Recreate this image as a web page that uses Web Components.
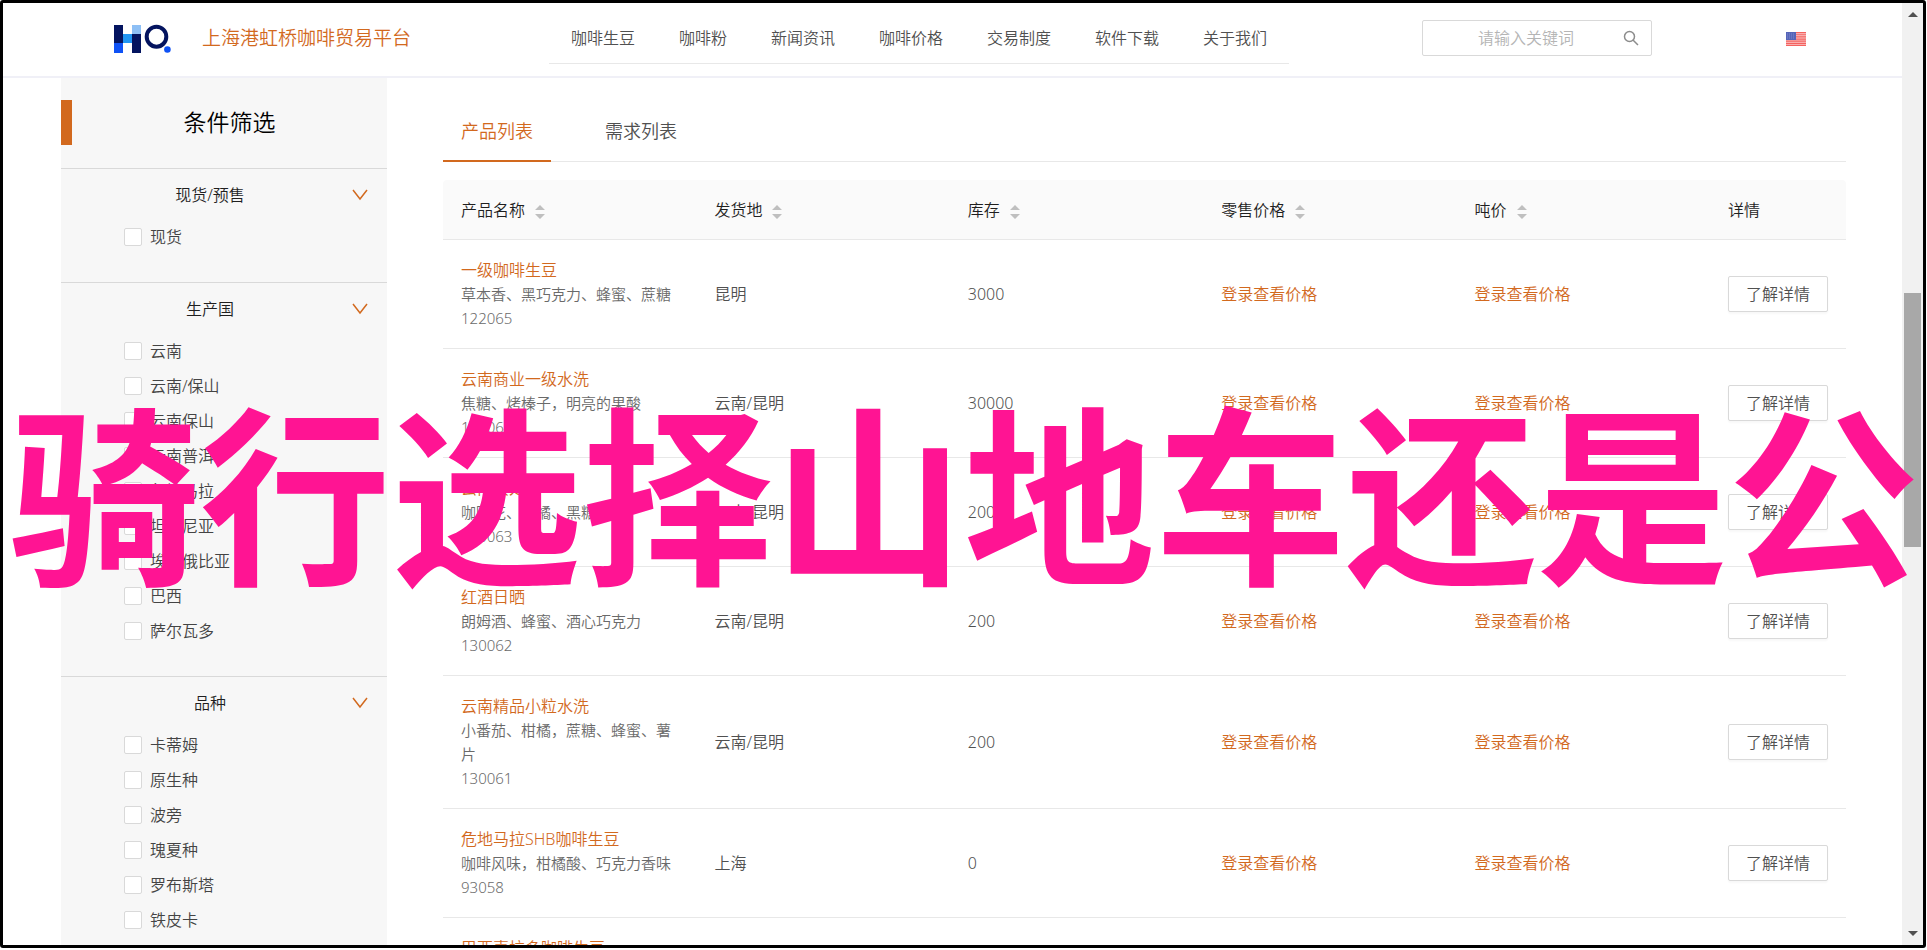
<!DOCTYPE html>
<html lang="zh-CN">
<head>
<meta charset="utf-8">
<title>上海港虹桥咖啡贸易平台</title>
<style>
html, body { height: 100%; margin: 0; }
body {
  overflow: hidden;
  background: #fff;
  font-family: "Noto Sans", "Noto Sans CJK SC", sans-serif;
  font-size: 16px;
  line-height: 24px;
  font-weight: 350;
  color: #505050;
  --brand: #d2691e;
  --line: #e8e8e8;
  --control: #d9d9d9;
}
</style>
</head>
<body>
<trade-page></trade-page>
<script>
const define = (name, markup, setup) => {
  const template = document.createElement('template');
  template.innerHTML = '<style>*{box-sizing:border-box}a{color:inherit;text-decoration:none}</style>' + markup;
  customElements.define(name, class extends HTMLElement {
    connectedCallback() {
      if (this.shadowRoot) return;
      const root = this.attachShadow({ mode: 'open' });
      root.append(template.content.cloneNode(true));
      if (setup) setup(root, this);
    }
  });
};

define('brand-logo', `
<style>
:host { display: flex; align-items: center; gap: 31px; }
svg { display: block; margin-top: 2px; }
a { color: var(--brand); font-size: 19px; white-space: nowrap; }
</style>
<svg width="58" height="30" viewBox="0 0 58 30" role="img" aria-label="HQ">
  <path fill="#04145f" d="M1 1h9v18H1zM19 10h9v19h-9z"/>
  <path fill="#8dbff5" d="M19 1h9v9h-9z"/>
  <path fill="#2196f3" d="M10 10h9v9h-9z"/>
  <path fill="#0f52f5" d="M1 19h9v10H1z"/>
  <ellipse cx="43.500" cy="12.700" rx="9.800" ry="10" fill="none" stroke="#04145f" stroke-width="4"/>
  <circle cx="54.400" cy="25.500" r="3.300" fill="#0f52f5"/>
</svg>
<a href="#">上海港虹桥咖啡贸易平台</a>`);

define('main-nav', `
<style>
:host { display: block; }
nav { display: flex; height: 61px; border-bottom: 1px solid var(--line); }
a { padding: 0 22px; line-height: 70px; white-space: nowrap; }
</style>
<nav>
<a href="#">咖啡生豆</a><a href="#">咖啡粉</a><a href="#">新闻资讯</a><a href="#">咖啡价格</a><a href="#">交易制度</a><a href="#">软件下载</a><a href="#">关于我们</a>
</nav>`);

define('search-box', `
<style>
:host { display: block; position: relative; width: 230px; }
input { display: block; width: 100%; height: 36px; padding: 0 34px 0 12px; border: 1px solid var(--control); border-radius: 2px; background: #fff; font: inherit; text-align: center; color: inherit; outline: 0; }
input::placeholder { color: #b5b5b5; opacity: 1; }
button { position: absolute; right: 13px; top: 10px; width: 16px; height: 16px; padding: 0; border: 0; background: none; }
svg { display: block; }
</style>
<input type="text" aria-label="关键词" placeholder="请输入关键词">
<button type="button" aria-label="搜索"><svg width="16" height="16" viewBox="0 0 16 16" fill="none" stroke="#8c8c8c" stroke-width="1.500"><circle cx="6.500" cy="6.500" r="5"/><path d="M10 10l5 5"/></svg></button>`);

define('lang-flag', `
<style>
:host { display: block; }
svg { display: block; }
</style>
<a href="#" aria-label="English"><svg width="20" height="14" viewBox="0 0 20 14">
<path fill="#fbc9c9" d="M0 0h20v14H0z"/>
<path stroke="#f4625f" stroke-width="1.200" d="M0 .6h20M0 2.750h20M0 4.900h20M0 7.050h20M0 9.200h20M0 11.350h20M0 13.400h20"/>
<path fill="#5565b8" d="M0 0h10v8H0z"/>
<path stroke="#8f9ad4" stroke-width=".7" stroke-dasharray="1 1" d="M1 2h8M1 4h8M1 6h8"/>
</svg></a>`);

define('site-header', `
<style>
:host { display: grid; grid-template-columns: 436px 740px 133px 230px 1fr; height: 75px; border-bottom: 2px solid #f0f0f7; padding-left: 110px; }
brand-logo { height: 70px; }
search-box { grid-column: 4; margin-top: 17px; }
lang-flag { margin: 29px 0 0 134px; }
</style>
<brand-logo></brand-logo><main-nav></main-nav><search-box></search-box><lang-flag></lang-flag>`);

define('filter-option', `
<style>
:host { display: block; }
label { display: flex; align-items: center; gap: 8px; height: 35px; }
input { appearance: none; width: 18px; height: 18px; margin: 0; border: 1px solid var(--control); border-radius: 2px; background: #fff; }
</style>
<label><input type="checkbox"><slot></slot></label>`);

define('filter-group', `
<style>
:host { display: block; border-top: 1px solid var(--control); padding-bottom: 28px; }
header { display: flex; align-items: center; height: 50px; padding: 2px 18px 0 0; }
h3 { flex: 1; margin: 0; padding-left: 8px; font: inherit; color: #1f1f1f; text-align: center; }
button { width: 18px; height: 18px; padding: 0; border: 0; background: none; }
svg { display: block; }
.options { padding-left: 63px; }
</style>
<header><h3></h3><button type="button" aria-label="收起"><svg width="18" height="18" viewBox="0 0 18 18" fill="none" stroke="#d2691e" stroke-width="1.500"><path d="M2 4l7 9 7-9"/></svg></button></header>
<div class="options"><slot></slot></div>`, (root, host) => {
  root.querySelector('h3').textContent = host.getAttribute('heading');
});

define('filter-panel', `
<style>
:host { display: block; background: #f7f7f7; color: #444; }
.title { display: flex; align-items: center; height: 90px; padding-bottom: 2px; }
.title::before { content: ""; width: 11px; height: 45px; background: var(--brand); }
h2 { flex: 1; margin: 0; font-size: 23px; line-height: 32px; font-weight: inherit; color: #000; text-align: center; }
</style>
<div class="title"><h2>条件筛选</h2></div>
<filter-group heading="现货/预售"><filter-option>现货</filter-option></filter-group>
<filter-group heading="生产国"><filter-option>云南</filter-option><filter-option>云南/保山</filter-option><filter-option>云南保山</filter-option><filter-option>云南普洱</filter-option><filter-option>危地马拉</filter-option><filter-option>坦桑尼亚</filter-option><filter-option>埃塞俄比亚</filter-option><filter-option>巴西</filter-option><filter-option>萨尔瓦多</filter-option></filter-group>
<filter-group heading="品种"><filter-option>卡蒂姆</filter-option><filter-option>原生种</filter-option><filter-option>波旁</filter-option><filter-option>瑰夏种</filter-option><filter-option>罗布斯塔</filter-option><filter-option>铁皮卡</filter-option></filter-group>`);

define('list-tabs', `
<style>
:host { display: flex; gap: 36px; border-bottom: 1px solid var(--line); font-size: 18px; }
button { height: 60px; margin-bottom: -1px; padding: 0 18px; border: 0; border-bottom: 2px solid transparent; background: none; font: inherit; color: inherit; }
button[aria-selected=true] { color: var(--brand); border-color: var(--brand); }
</style>
<button type="button" role="tab" aria-selected="true">产品列表</button><button type="button" role="tab" aria-selected="false">需求列表</button>`);

const products = [
  ['一级咖啡生豆', '草本香、黑巧克力、蜂蜜、蔗糖', '122065', '昆明', '3000'],
  ['云南商业一级水洗', '焦糖、烤榛子，明亮的果酸', '130064', '云南/昆明', '30000'],
  ['云南蜜处理', '咖啡花、柑橘、黑糖', '130063', '云南/昆明', '200'],
  ['红酒日晒', '朗姆酒、蜂蜜、酒心巧克力', '130062', '云南/昆明', '200'],
  ['云南精品小粒水洗', '小番茄、柑橘，蔗糖、蜂蜜、薯片', '130061', '云南/昆明', '200'],
  ['危地马拉SHB咖啡生豆', '咖啡风味，柑橘酸、巧克力香味', '93058', '上海', '0'],
  ['巴西喜拉多咖啡生豆', '坚果、黑巧克力', '93057', '上海', '0']
];

define('product-table', `
<style>
:host { display: block; }
table { width: 100%; table-layout: fixed; border-collapse: separate; border-spacing: 0; }
th, td { padding: 18px; text-align: left; border-bottom: 1px solid var(--line); }
th:last-child { width: 136px; }
th { height: 60px; padding: 0 18px; font-weight: inherit; color: #1f1f1f; background: #fafafa; white-space: nowrap; }
th:first-child { border-top-left-radius: 4px; }
th:last-child { border-top-right-radius: 4px; }
th svg { margin-left: 10px; vertical-align: -3px; }
td a { display: block; color: var(--brand); }
p { margin: 0; font-size: 15px; color: #6a6a6a; }
td button { display: block; width: 100%; height: 36px; padding: 0; border: 1px solid var(--control); border-radius: 2px; background: #fff; box-shadow: 0 2px 2px #00000008; font: inherit; color: inherit; }
</style>
<table><thead><tr></tr></thead><tbody></tbody></table>`, root => {
  const sorter = '<svg width="10" height="14" viewBox="0 0 10 14" fill="#bfbfbf"><path d="M5 0l5 5H0zM5 14l5-5H0z"/></svg>';
  root.querySelector('thead tr').innerHTML = ['产品名称', '发货地', '库存', '零售价格', '吨价', '详情']
    .map((t, i) => `<th scope="col">${t}${i < 5 ? sorter : ''}</th>`).join('');
  root.querySelector('tbody').innerHTML = products.map(([name, taste, code, place, stock]) => `<tr>
    <td><a href="#">${name}</a><p>${taste}</p><p>${code}</p></td><td>${place}</td><td>${stock}</td>
    <td><a href="#">登录查看价格</a></td><td><a href="#">登录查看价格</a></td>
    <td><button type="button">了解详情</button></td></tr>`).join('');
});

define('page-scrollbar', `
<style>
:host { display: grid; grid-template-rows: 23px 267px 254px 1fr 23px; justify-items: center; align-items: center; background: #f1f1f1; }
i { width: 17px; height: 254px; grid-row: 3; background: #a8a8a8; }
svg { display: block; }
.down { grid-row: 5; }
</style>
<svg width="10" height="5" viewBox="0 0 10 5" fill="#505050"><path d="M5 0l5 5H0z"/></svg>
<i></i>
<svg class="down" width="10" height="5" viewBox="0 0 10 5" fill="#505050"><path d="M5 5l5-5H0z"/></svg>`);

define('caption-overlay', `
<style>
:host { position: absolute; inset: 0; display: flex; align-items: center; justify-content: center; pointer-events: none; color: #ff1493; font-size: 191px; line-height: 240px; font-weight: 700; font-family: "Noto Sans CJK SC", sans-serif; white-space: nowrap; padding: 26px 0 0 2px; }
</style>
<slot></slot>`);

define('trade-page', `
<style>
:host { position: relative; display: grid; grid-template-columns: 1fr 21px; grid-template-rows: 100%; height: calc(100vh - 2px); margin-right: 1px; border: 3px solid #000; border-radius: 3px; overflow: hidden; box-sizing: border-box; }
.view { min-width: 0; min-height: 0; overflow: hidden; }
.body { display: grid; grid-template-columns: 326px 1fr; gap: 56px; padding: 0 56px 0 58px; min-height: 100%; }
list-tabs { margin: 24px 0 18px; }
</style>
<div class="view">
<site-header></site-header>
<div class="body"><filter-panel></filter-panel><main><list-tabs role="tablist"></list-tabs><product-table></product-table></main></div>
</div>
<page-scrollbar aria-hidden="true"></page-scrollbar>
<caption-overlay>骑行选择山地车还是公</caption-overlay>`);
</script>
</body>
</html>
